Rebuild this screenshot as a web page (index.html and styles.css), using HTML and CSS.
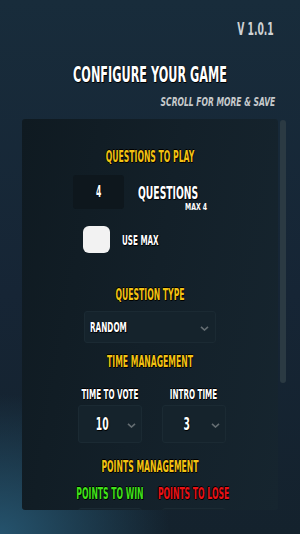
FILE: index.html
```html
<!DOCTYPE html>
<html lang="en">
  <head>
    <meta charset="UTF-8" />
    <meta name="viewport" content="width=device-width, initial-scale=1.0" />
    <title>Configure</title>
    <link rel="stylesheet" href="styles.css">
  </head>
  <body>
    <header class="top">
      <div class="version">V 1.0.1</div>
      <h1 class="title">Configure your game</h1>
      <div class="hint">Scroll for more &amp; save</div>
    </header>

    <div class="wrap">
      <div class="panel">
        <h2 class="label">Questions to play</h2>
        <div class="count-row">
          <div class="num-box"><span class="sq">4</span></div>
          <div class="count-text">
            <span class="sq big">Questions</span>
            <span class="sq small">Max 4</span>
          </div>
        </div>
        <div class="check-row">
          <div class="check"></div>
          <span class="sq check-text">Use max</span>
        </div>

        <h2 class="label type-label">Question type</h2>
        <div class="select wide">
          <span class="sq random">Random</span>
          <svg class="chev" width="9" height="5" viewBox="0 0 9 5"><polyline points="1,0.8 4.5,4 8,0.8" fill="none" stroke="#646d72" stroke-width="1.6"/></svg>
        </div>

        <h2 class="label time-label">Time management</h2>
        <div class="pair">
          <div class="col">
            <span class="sq sub">Time to vote</span>
            <div class="select small-sel">
              <span class="val"><span class="sq">10</span></span>
              <svg class="chev" width="9" height="5" viewBox="0 0 9 5"><polyline points="1,0.8 4.5,4 8,0.8" fill="none" stroke="#646d72" stroke-width="1.6"/></svg>
            </div>
          </div>
          <div class="col">
            <span class="sq sub">Intro time</span>
            <div class="select small-sel">
              <span class="val"><span class="sq">3</span></span>
              <svg class="chev" width="9" height="5" viewBox="0 0 9 5"><polyline points="1,0.8 4.5,4 8,0.8" fill="none" stroke="#646d72" stroke-width="1.6"/></svg>
            </div>
          </div>
        </div>

        <h2 class="label points-label">Points management</h2>
        <div class="pair">
          <div class="col">
            <span class="sq sub pts win">Points to win</span>
            <div class="select small-sel last">
              <span class="val"><span class="sq">10</span></span>
            </div>
          </div>
          <div class="col">
            <span class="sq sub pts lose">Points to lose</span>
            <div class="select small-sel last">
              <span class="val"><span class="sq">5</span></span>
            </div>
          </div>
        </div>
      </div>
      <div class="bar"></div>
    </div>
  </body>
</html>
```

FILE: styles.css
```css
* {
  margin: 0;
  padding: 0;
  box-sizing: border-box;
}

body {
  width: 300px;
  height: 534px;
  overflow: hidden;
  font-family: "DejaVu Sans Condensed", "DejaVu Sans", sans-serif;
  font-weight: bold;
  line-height: 1;
  text-transform: uppercase;
  color: #fff;
  background:
    radial-gradient(ellipse 170px 140px at 0% 100%, #25536d 0%, rgba(37, 83, 109, 0) 100%),
    linear-gradient(180deg, #182c3b 0%, #162535 55%, #14222d 100%);
}

/* condensed look: the display font is very narrow */
.sq {
  display: inline-block;
  white-space: nowrap;
  transform: scaleX(0.57);
}

.top {
  height: 119px;
  padding-top: 20px;
}

.version {
  text-align: right;
  padding-right: 46px;
  font-size: 18px;
  color: #cfd2d4;
  transform: scaleX(0.57);
  transform-origin: right;
}

.title {
  margin-top: 26px;
  text-align: center;
  font-size: 22px;
  text-shadow: 0 0 2px #000, 1px 1px 0 #000;
  transform: scaleX(0.57);
}

.hint {
  margin-top: 9px;
  text-align: right;
  padding-right: 38px;
  font-size: 13px;
  font-style: italic;
  color: #c6c9cb;
  transform: scaleX(0.65);
  transform-origin: right;
}

.wrap {
  display: flex;
  gap: 2px;
  padding-left: 22px;
}

.panel {
  width: 256px;
  height: 391px;
  overflow: hidden;
  border-radius: 3px;
  padding-top: 31px;
  background: linear-gradient(100deg, #0f1a21 0%, #132029 50%, #16252f 100%);
}

.bar {
  width: 6px;
  height: 263px;
  margin-top: 1px;
  border-radius: 3px;
  background: #2b3a43;
}

.label {
  text-align: center;
  font-size: 15px;
  color: #f3c313;
  text-shadow: 1px 1px 0 #000, -1px 0 0 #000, 0 -1px 0 #000;
  transform: scaleX(0.57);
}

.count-row {
  display: flex;
  height: 34px;
  gap: 14px;
  margin-top: 10px;
  padding-left: 51px;
}

.num-box {
  width: 51px;
  height: 34px;
  border-radius: 3px;
  background: #0e171d;
  display: flex;
  align-items: center;
  justify-content: center;
  font-size: 15px;
  text-shadow: 0 0 2px #000;
}

.count-text {
  display: flex;
  flex-direction: column;
  align-items: flex-start;
  padding-top: 9px;
}

.count-text .sq {
  transform-origin: left;
}

.big {
  font-size: 18px;
  height: 18px;
  text-shadow: 0 0 2px #000, 1px 1px 0 #000;
}

.small {
  font-size: 9.5px;
  height: 9px;
  margin-left: 47px;
  transform: scaleX(0.72) !important;
}

.check-row {
  display: flex;
  align-items: center;
  gap: 12px;
  margin-top: 17px;
  padding-left: 61px;
}

.check {
  width: 27px;
  height: 27px;
  border-radius: 6px;
  background: #f2f2f2;
}

.check-text {
  font-size: 14px;
  transform-origin: left;
  text-shadow: 0 0 2px #000, 1px 1px 0 #000;
}

.type-label {
  margin-top: 35px;
}

.select {
  display: flex;
  align-items: center;
  background: #15232c;
  border: 1px solid #1b2a33;
  border-radius: 3px;
  text-shadow: 0 0 2px #000, 1px 1px 0 #000;
}

.wide {
  width: 132px;
  height: 32px;
  margin: 8px auto 0;
  padding: 0 6px 0 5px;
  justify-content: space-between;
}

.random {
  font-size: 13.5px;
  transform: scaleX(0.6);
  transform-origin: left;
  margin-top: 1px;
}

.chev {
  display: block;
  margin-top: 2px;
}

.time-label {
  margin-top: 12px;
}

.pair {
  display: flex;
  justify-content: center;
  gap: 20px;
  padding-left: 3px;
}

.col {
  width: 64px;
  display: flex;
  flex-direction: column;
  align-items: center;
}

.sub {
  margin-top: 17px;
  font-size: 14px;
  text-shadow: 1px 1px 0 #000, -1px 0 0 #000, 0 -1px 0 #000;
}

.small-sel {
  width: 64px;
  height: 38px;
  margin-top: 4px;
  padding-right: 5px;
  font-size: 18px;
}

.val {
  flex: 1;
  text-align: center;
}

.points-label {
  margin-top: 17px;
}

.pts {
  margin-top: 12px;
  font-size: 15px;
}

.last {
  margin-top: 6px;
}

.win {
  color: #40e21a;
}

.lose {
  color: #e81216;
}
```
